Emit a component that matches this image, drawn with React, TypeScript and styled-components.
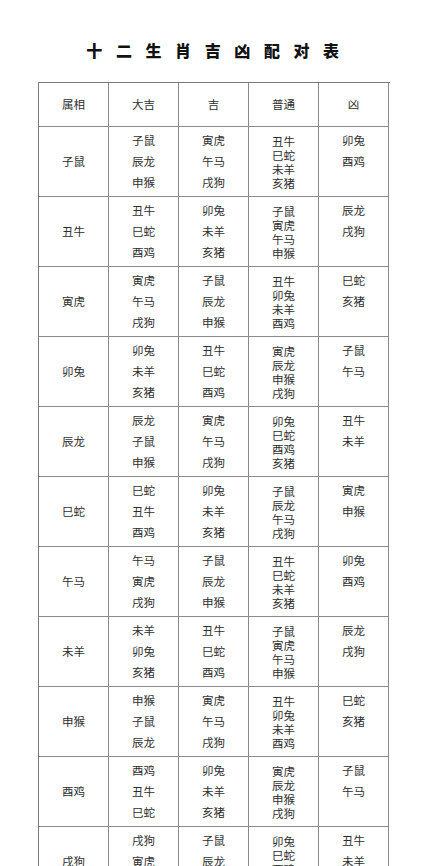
import React from "react";
import styled, { createGlobalStyle } from "styled-components";

const Global = createGlobalStyle`
  html, body { margin: 0; padding: 0; background: #ffffff; }
  body { font-family: "Noto Sans CJK SC", "Noto Sans", sans-serif; color: #2b2b2b; }
`;

const Page = styled.div`
  width: 425px;
  height: 866px;
  overflow: hidden;
  background: #ffffff;
`;

const Title = styled.h1`
  margin: 0;
  padding: 40px 0 0 14px;
  height: 42px;
  line-height: 20px;
  text-align: center;
  font-family: "Noto Sans CJK SC", sans-serif;
  font-size: 16px;
  font-weight: 900;
  letter-spacing: 13.6px;
  color: #111111;
`;

const Table = styled.div`
  margin-left: 38px;
  width: 351px;
  display: grid;
  grid-template-columns: repeat(5, 70px);
  grid-auto-rows: 70px;
  grid-template-rows: 44px;
  border-left: 1px solid #7a7a7a;
  border-top: 1px solid #7a7a7a;
`;

const Cell = styled.div<{ $kind: "head" | "name" | "list" | "dense" }>`
  box-sizing: border-box;
  border-right: 1px solid #8a8a8a;
  border-bottom: 1px solid #8a8a8a;
  font-size: 11.5px;
  color: #2e2e2e;
  display: flex;
  flex-direction: column;
  align-items: center;
  justify-content: ${(p) => (p.$kind === "head" || p.$kind === "name" ? "center" : "flex-start")};
  padding-top: ${(p) => (p.$kind === "list" ? "3px" : p.$kind === "dense" ? "7px" : "0")};
  line-height: ${(p) => (p.$kind === "dense" ? "14px" : "21px")};
`;

const Line = styled.span`
  display: block;
  white-space: nowrap;
`;

const headers = ["属相", "大吉", "吉", "普通", "凶"];

const rows: [string, string[], string[], string[], string[]][] = [
  ["子鼠", ["子鼠", "辰龙", "申猴"], ["寅虎", "午马", "戌狗"], ["丑牛", "巳蛇", "未羊", "亥猪"], ["卯兔", "酉鸡"]],
  ["丑牛", ["丑牛", "巳蛇", "酉鸡"], ["卯兔", "未羊", "亥猪"], ["子鼠", "寅虎", "午马", "申猴"], ["辰龙", "戌狗"]],
  ["寅虎", ["寅虎", "午马", "戌狗"], ["子鼠", "辰龙", "申猴"], ["丑牛", "卯兔", "未羊", "酉鸡"], ["巳蛇", "亥猪"]],
  ["卯兔", ["卯兔", "未羊", "亥猪"], ["丑牛", "巳蛇", "酉鸡"], ["寅虎", "辰龙", "申猴", "戌狗"], ["子鼠", "午马"]],
  ["辰龙", ["辰龙", "子鼠", "申猴"], ["寅虎", "午马", "戌狗"], ["卯兔", "巳蛇", "酉鸡", "亥猪"], ["丑牛", "未羊"]],
  ["巳蛇", ["巳蛇", "丑牛", "酉鸡"], ["卯兔", "未羊", "亥猪"], ["子鼠", "辰龙", "午马", "戌狗"], ["寅虎", "申猴"]],
  ["午马", ["午马", "寅虎", "戌狗"], ["子鼠", "辰龙", "申猴"], ["丑牛", "巳蛇", "未羊", "亥猪"], ["卯兔", "酉鸡"]],
  ["未羊", ["未羊", "卯兔", "亥猪"], ["丑牛", "巳蛇", "酉鸡"], ["子鼠", "寅虎", "午马", "申猴"], ["辰龙", "戌狗"]],
  ["申猴", ["申猴", "子鼠", "辰龙"], ["寅虎", "午马", "戌狗"], ["丑牛", "卯兔", "未羊", "酉鸡"], ["巳蛇", "亥猪"]],
  ["酉鸡", ["酉鸡", "丑牛", "巳蛇"], ["卯兔", "未羊", "亥猪"], ["寅虎", "辰龙", "申猴", "戌狗"], ["子鼠", "午马"]],
  ["戌狗", ["戌狗", "寅虎", "午马"], ["子鼠", "辰龙", "申猴"], ["卯兔", "巳蛇", "酉鸡", "亥猪"], ["丑牛", "未羊"]],
  ["亥猪", ["亥猪", "卯兔", "未羊"], ["丑牛", "巳蛇", "酉鸡"], ["子鼠", "寅虎", "午马", "申猴"], ["辰龙", "戌狗"]],
];

const Lines = ({ items }: { items: string[] }) => (
  <>
    {items.map((t, i) => (
      <Line key={i}>{t}</Line>
    ))}
  </>
);

export default function App() {
  return (
    <Page>
      <Global />
      <Title>十二生肖吉凶配对表</Title>
      <Table>
        {headers.map((h) => (
          <Cell key={h} $kind="head">
            {h}
          </Cell>
        ))}
        {rows.map(([name, big, good, normal, bad]) => (
          <React.Fragment key={name}>
            <Cell $kind="name">{name}</Cell>
            <Cell $kind="list">
              <Lines items={big} />
            </Cell>
            <Cell $kind="list">
              <Lines items={good} />
            </Cell>
            <Cell $kind="dense">
              <Lines items={normal} />
            </Cell>
            <Cell $kind="list">
              <Lines items={bad} />
            </Cell>
          </React.Fragment>
        ))}
      </Table>
    </Page>
  );
}
